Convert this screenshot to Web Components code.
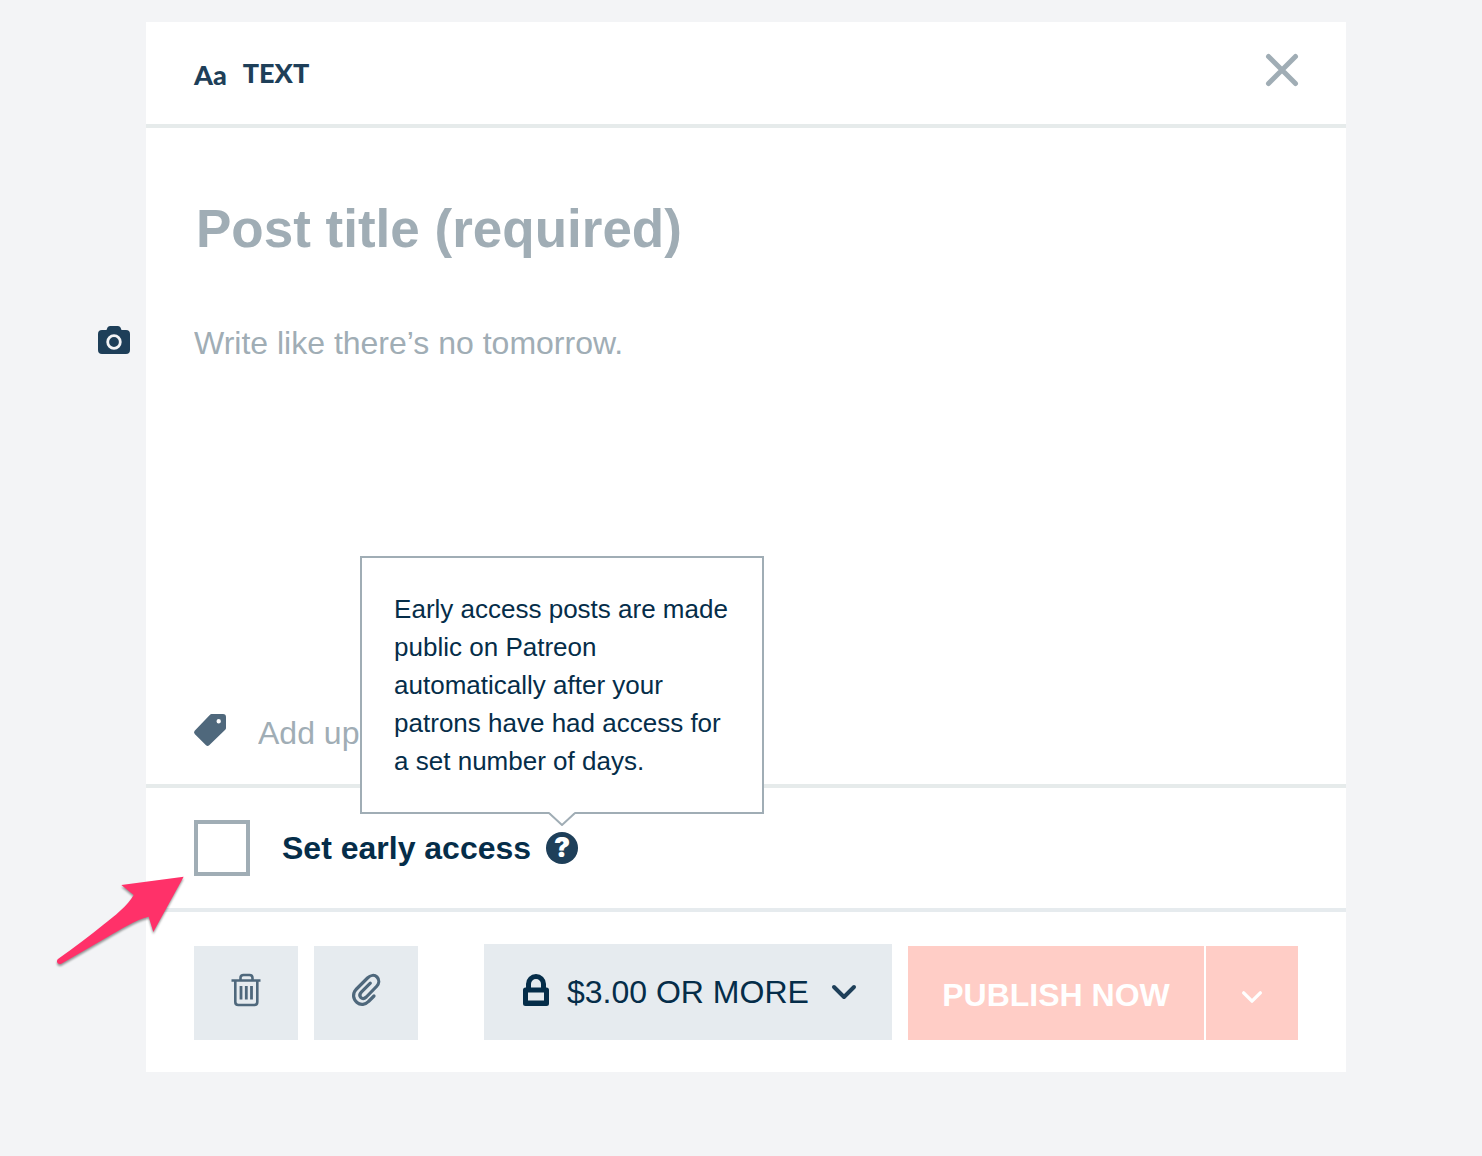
<!DOCTYPE html>
<html lang="en">
<head>
<meta charset="utf-8">
<title>Post editor</title>
<style>
:root{--ink:#052d49;--navy:#1e3f59;--slate:#4f687c;--gray:#a0adb5;--rule:#e6ebeb;--fill:#e6ebef;--pink:#ffcdc6}
body{margin:0;background:#f3f4f6;color:var(--ink);font-family:"Liberation Sans",Arial,sans-serif;font-size:32px}
</style>
</head>
<body>
<post-editor>
  <editor-header slot="header"></editor-header>
  <post-fields slot="fields"></post-fields>
  <early-access slot="access">
    <help-tip slot="help">Early access posts are made public on Patreon automatically after your patrons have had access for a set number of days.</help-tip>
  </early-access>
  <editor-actions slot="actions">
    <icon-button icon="trash" label="Delete"></icon-button>
    <icon-button icon="clip" label="Attach"></icon-button>
    <access-select slot="end"></access-select>
    <publish-button slot="end">PUBLISH NOW</publish-button>
  </editor-actions>
</post-editor>
<script>
const RESET = `*{box-sizing:border-box}:host{display:block}
button,input,textarea,select{font:inherit;color:inherit;border:0;border-radius:0;background:none;margin:0;padding:0;outline:0}
button{cursor:pointer}`;

const ICONS = {
  close: ['0 0 32 32', '<path d="M2.500 2.500l27 27M29.500 2.500l-27 27" stroke="currentColor" stroke-width="5" stroke-linecap="round" fill="none"/>'],
  camera: ['0 0 32 28', '<path d="M4 4h4.500l1-2.500Q10.200 0 12 0h8q1.800 0 2.500 1.500l1 2.500H28q4 0 4 4v16q0 4-4 4H4q-4 0-4-4V8q0-4 4-4z" fill="currentColor"/><circle cx="16" cy="16" r="6.300" fill="none" stroke="#f3f4f6" stroke-width="2.800"/>'],
  tag: ['0 0 32 32', '<path fill-rule="evenodd" d="M17.500 0H29q3 0 3 3v11q0 1-.8 1.800L15.200 31.300q-1.700 1.400-3.200 0L.7 20q-1.400-1.600 0-3.200L16 .7Q16.600 0 17.500 0zM24.700 5a2.200 2.200 0 1 0 0 4.400 2.200 2.200 0 0 0 0-4.400z" fill="currentColor"/>'],
  trash: ['0 0 30 32', '<g fill="none" stroke="currentColor"><path d="M.500 6.500h29M4.300 7v21q0 3 3 3h16q3 0 3-3V7M9.500 6V4q0-3 3-3h6q3 0 3 3v2" stroke-width="2.600"/><path d="M10 12v13.500M15.300 12v13.500M20.500 12v13.500" stroke-width="2.800"/></g>'],
  clip: ['0 0 28 32', '<path d="M22 22l-5.500 5.500C13.500 30.700 8.500 31.500 5 28.500 .8 25 .4 19.500 4 15.500L15.500 4c3-3 7-3.400 9.500-1 2.600 2.600 2.300 6.500-.5 9.500L14.300 23c-1.800 1.700-4 1.900-5.400.6-1.500-1.500-1.300-3.600.4-5.400l9-9" fill="none" stroke="currentColor" stroke-width="3.200" stroke-linecap="round" stroke-linejoin="round"/>'],
  lock: ['0 0 26 32', '<path fill-rule="evenodd" d="M3 13.500V10a10 10 0 0 1 20 0v3.500h.5q2.500 0 2.500 2.500v13.500q0 2.500-2.500 2.500h-21Q0 32 0 29.500V16q0-2.500 2.500-2.500zM8 13.500h10V10a5 5 0 0 0-10 0zM5 18.500V26.500h16V18.500z" fill="currentColor"/>'],
  chevron: ['0 0 24 14', '<path d="M2 2l10 10L22 2" fill="none" stroke="currentColor" stroke-width="4" stroke-linecap="round" stroke-linejoin="round"/>']
};

class UiIcon extends HTMLElement {
  connectedCallback() {
    const [box, art] = ICONS[this.getAttribute('name')];
    this.attachShadow({mode:'open'}).innerHTML =
      `<style>:host{display:block;flex:none}svg{display:block;width:100%;height:100%;overflow:visible}</style><svg viewBox="${box}" aria-hidden="true">${art}</svg>`;
  }
}

function define(name, css, html, init) {
  customElements.define(name, class extends HTMLElement {
    constructor() {
      super();
      const t = document.createElement('template');
      t.innerHTML = `<style>${RESET}${css}</style>${html}`;
      this.attachShadow({mode:'open'}).append(t.content.cloneNode(true));
    }
    connectedCallback() { if (init) init(this, this.shadowRoot); }
  });
}

customElements.define('ui-icon', UiIcon);

define('post-editor', `
  :host{padding:22px 136px 84px 146px}
  main{background:#fff}
`, `<main><slot name="header"></slot><slot name="fields"></slot><slot name="access"></slot><slot name="actions"></slot></main>`);

define('editor-header', `
  header{display:flex;align-items:center;gap:16px;height:106px;padding:0 48px;border-bottom:4px solid var(--rule);color:var(--navy);font:900 27px/32px Lato,sans-serif}
  .glyph{padding-top:4px}
  h1{margin:0;font:inherit}
  button{margin-left:auto;color:var(--gray);padding-bottom:6px}
  ui-icon{width:32px;height:32px}
`, `<header><span class="glyph">Aa</span><h1>TEXT</h1><button aria-label="Close"><ui-icon name="close"></ui-icon></button></header>`);

define('post-fields', `
  section{padding:68px 48px 26px;border-bottom:4px solid var(--rule)}
  input,textarea{display:block;flex:1;min-width:0;width:100%}
  ::placeholder{color:var(--gray);opacity:1}
  .title{height:64px;padding-left:2px;font-size:53px;font-weight:700}
  .write{display:flex;align-items:flex-start;gap:64px;margin:59px 0 0 -96px}
  .write button{height:42px;color:var(--navy)}
  .write ui-icon{width:32px;height:28px}
  textarea{height:390px;line-height:48px;resize:none}
  .tags{display:flex;align-items:center;gap:32px;color:var(--slate)}
  .tags input{height:49px}
  .tags ui-icon{width:32px;height:32px;margin-bottom:8px}
`, `<section>
  <input class="title" aria-label="Post title" placeholder="Post title (required)">
  <div class="write"><button aria-label="Add image"><ui-icon name="camera"></ui-icon></button>
  <textarea aria-label="Post text" placeholder="Write like there’s no tomorrow."></textarea></div>
  <div class="tags"><ui-icon name="tag"></ui-icon><input aria-label="Tags" placeholder="Add up"></div>
</section>`);

define('early-access', `
  section{display:flex;align-items:center;padding:32px 48px;border-bottom:4px solid #e6ebee}
  .box{position:relative;height:56px;margin-right:32px}
  input{appearance:none;display:block;width:56px;height:56px;border:4px solid var(--gray);background:#fff}
  input:checked{background:var(--gray)}
  label{font-weight:700;margin-right:15px}
  .pointer{position:absolute;left:-154px;top:40px;width:160px;height:120px;pointer-events:none;filter:drop-shadow(0 2px 1px #0006)}
`, `<section><div class="box"><input type="checkbox" id="early">
  <svg class="pointer" viewBox="0 0 480 360" aria-hidden="true"><path d="M431 50L244 75l37 30C265 135 222 170 190 194Q130 243 55 296c-9 7-2 20 9 15Q130 273 204 230C240 209 285 180 326 170l14 46z" fill="#ff3169"/></svg></div>
  <label for="early">Set early access</label><slot name="help"></slot></section>`);

define('help-tip', `
  :host{position:relative}
  button{display:block;width:32px;height:32px;border-radius:50%;background:var(--navy);color:#fff;font:900 27px/32px Inter,sans-serif;text-align:center}
  .tip{position:absolute;z-index:2;left:50%;bottom:calc(100% + 18px);transform:translateX(-50%);width:404px;padding:32px;border:2px solid var(--gray);background:#fff;font-size:26px;line-height:38px}
  svg{position:absolute;left:50%;top:100%;width:28px;height:14px;margin-left:-14px}
`, `<button aria-label="Help" aria-describedby="tip">?</button>
  <div class="tip" id="tip" role="tooltip"><slot></slot><svg viewBox="0 0 28 14" aria-hidden="true"><path d="M1 0l13 13L27 0" fill="#fff"/><path d="M1 1l13 12L27 1" fill="none" stroke="#a0adb5" stroke-width="2"/><path d="M2 0h24" stroke="#fff" stroke-width="1"/></svg></div>`);

define('editor-actions', `
  footer{display:flex;justify-content:space-between;align-items:flex-end;gap:16px;padding:32px 48px}
  div{display:flex;align-items:flex-end;gap:16px}
`, `<footer><div><slot></slot></div><div><slot name="end"></slot></div></footer>`);

define('icon-button', `
  button{display:grid;place-items:center;width:104px;height:94px;padding-bottom:6px;background:var(--fill);color:var(--slate)}
  ui-icon{width:30px;height:32px}
`, `<button></button>`, (host, root) => {
  const b = root.querySelector('button');
  b.setAttribute('aria-label', host.getAttribute('label'));
  b.innerHTML = `<ui-icon name="${host.getAttribute('icon')}"></ui-icon>`;
});

define('access-select', `
  div{display:flex;align-items:center;width:408px;height:96px;padding:0 36px 0 39px;background:var(--fill)}
  select{appearance:none;flex:1;min-width:0;height:96px;padding-left:18px}
  .lock{width:26px;height:32px;margin-bottom:4px}
  .chevron{width:24px;height:14px;color:var(--navy)}
`, `<div><ui-icon class="lock" name="lock"></ui-icon><select aria-label="Who can see this post"><option>$3.00 OR MORE</option></select><ui-icon class="chevron" name="chevron"></ui-icon></div>`);

define('publish-button', `
  div{display:flex;gap:2px}
  button{height:94px;padding-top:4px;background:var(--pink);color:#fff;font-weight:700}
  .main{width:296px}
  .more{display:grid;place-items:center;width:92px;padding-top:8px}
  ui-icon{width:20px;height:12px}
`, `<div><button class="main"><slot></slot></button><button class="more" aria-label="More publish options"><ui-icon name="chevron"></ui-icon></button></div>`);
</script>
</body>
</html>
